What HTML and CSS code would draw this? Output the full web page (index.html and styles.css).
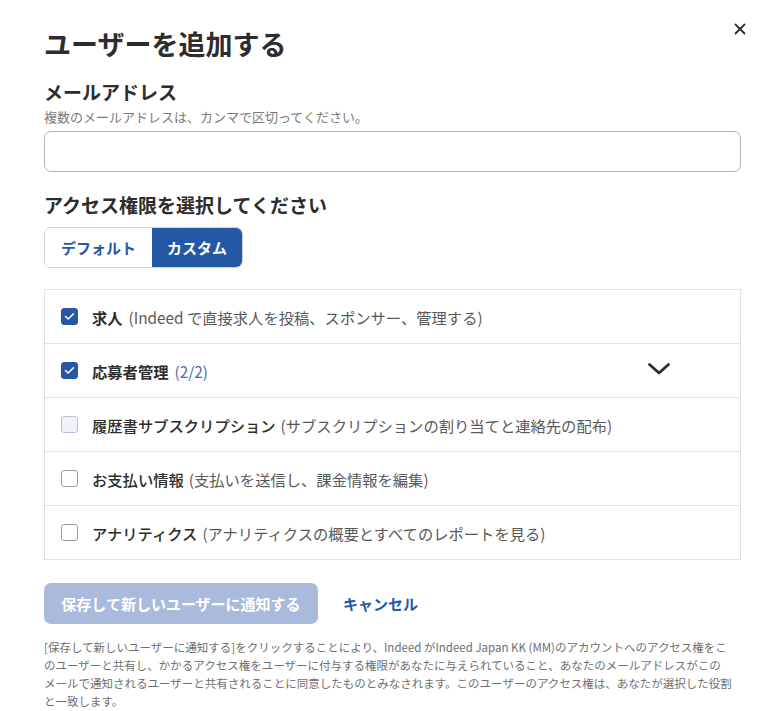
FILE: index.html
```html
<!DOCTYPE html>
<html lang="ja">
<head>
  <meta charset="UTF-8">
  <meta name="viewport" content="width=device-width, initial-scale=1.0">
  <title>ユーザーを追加する</title>
  <link rel="stylesheet" href="styles.css">
</head>
<body>
<div class="modal">
  <button class="close-btn" aria-label="閉じる">
    <svg width="12" height="12" viewBox="0 0 12 12"><path d="M1.5 1.5 L10.5 10.5 M10.5 1.5 L1.5 10.5" stroke="#2d2d2d" stroke-width="1.8" stroke-linecap="round"/></svg>
  </button>
  <h1>ユーザーを追加する</h1>

  <h2 class="section-title">メールアドレス</h2>
  <p class="hint">複数のメールアドレスは、カンマで区切ってください。</p>
  <input type="text" class="email-input">

  <h2 class="section-title access-title">アクセス権限を選択してください</h2>
  <div class="segmented">
    <button class="seg-item">デフォルト</button>
    <button class="seg-item active">カスタム</button>
  </div>

  <ul class="perm-list">
    <li class="perm-row">
      <span class="checkbox checked"><svg width="11" height="9" viewBox="0 0 11 9"><path d="M1.5 4.5 L4.2 7 L9.5 1.8" fill="none" stroke="#fff" stroke-width="1.6" stroke-linecap="round" stroke-linejoin="round"/></svg></span>
      <span class="perm-name">求人</span>
      <span class="perm-desc">(Indeed で直接求人を投稿、スポンサー、管理する)</span>
    </li>
    <li class="perm-row">
      <span class="checkbox checked"><svg width="11" height="9" viewBox="0 0 11 9"><path d="M1.5 4.5 L4.2 7 L9.5 1.8" fill="none" stroke="#fff" stroke-width="1.6" stroke-linecap="round" stroke-linejoin="round"/></svg></span>
      <span class="perm-name">応募者管理</span>
      <span class="perm-count">(2/2)</span>
      <span class="chevron"><svg width="24" height="14" viewBox="0 0 24 14"><path d="M2.5 2.5 L12 11 L21.5 2.5" fill="none" stroke="#2d2d2d" stroke-width="2.8" stroke-linecap="round" stroke-linejoin="round"/></svg></span>
    </li>
    <li class="perm-row">
      <span class="checkbox soft"></span>
      <span class="perm-name light">履歴書サブスクリプション</span>
      <span class="perm-desc">(サブスクリプションの割り当てと連絡先の配布)</span>
    </li>
    <li class="perm-row">
      <span class="checkbox"></span>
      <span class="perm-name light">お支払い情報</span>
      <span class="perm-desc">(支払いを送信し、課金情報を編集)</span>
    </li>
    <li class="perm-row">
      <span class="checkbox"></span>
      <span class="perm-name light">アナリティクス</span>
      <span class="perm-desc">(アナリティクスの概要とすべてのレポートを見る)</span>
    </li>
  </ul>

  <div class="actions">
    <button class="save-btn" disabled>保存して新しいユーザーに通知する</button>
    <button class="cancel-btn">キャンセル</button>
  </div>

  <p class="legal">[保存して新しいユーザーに通知する]をクリックすることにより、Indeed がIndeed Japan KK (MM)のアカウントへのアクセス権をこのユーザーと共有し、かかるアクセス権をユーザーに付与する権限があなたに与えられていること、あなたのメールアドレスがこのメールで通知されるユーザーと共有されることに同意したものとみなされます。このユーザーのアクセス権は、あなたが選択した役割と一致します。</p>
</div>
</body>
</html>
```

FILE: styles.css
```css
body {
  margin: 0;
  background-color: #fff;
  font-family: "Noto Sans CJK JP", "Noto Sans", sans-serif;
  color: #2d2d2d;
}
.modal {
  position: relative;
  padding: 26px 24px 0 44px;
}
.close-btn {
  position: absolute;
  top: 22px;
  right: 18px;
  border: none;
  background: none;
  padding: 0;
  width: 14px;
  height: 14px;
  display: flex;
  align-items: center;
  justify-content: center;
}
h1 {
  margin: 0;
  font-size: 27px;
  line-height: 36px;
  font-weight: 700;
  color: #2d2d2d;
}
.section-title {
  margin: 17px 0 0;
  font-size: 19px;
  line-height: 26px;
  font-weight: 700;
}
.access-title {
  margin-top: 20px;
}
.hint {
  margin: 3px 0 0;
  font-size: 13px;
  line-height: 18px;
  color: #7a7a7a;
}
.email-input {
  display: block;
  margin-top: 5px;
  width: 100%;
  height: 41px;
  box-sizing: border-box;
  border: 1px solid #b4b2b1;
  border-radius: 7px;
  padding: 0 12px;
  font-size: 14px;
}
.segmented {
  display: inline-flex;
  margin-top: 9px;
  height: 41px;
  border-radius: 7px;
  overflow: hidden;
  border: 1px solid #d4d2d0;
  box-sizing: border-box;
}
.seg-item {
  border: none;
  background: #fff;
  font-family: inherit;
  font-size: 15px;
  font-weight: 700;
  color: #2557a7;
  padding: 0;
  width: 107px;
}
.seg-item.active {
  background: #2557a7;
  color: #fff;
  width: 90px;
}
.perm-list {
  list-style: none;
  margin: 21px 0 0;
  padding: 0;
  border: 1px solid #e4e2e0;
}
.perm-row {
  display: flex;
  align-items: center;
  height: 54px;
  box-sizing: border-box;
  padding-left: 16px;
  font-size: 15.3px;
  border-top: 1px solid #e4e2e0;
}
.perm-row:first-child {
  border-top: none;
  height: 53px;
}
.checkbox {
  width: 17px;
  height: 17px;
  box-sizing: border-box;
  border: 1px solid #9d9d9d;
  border-radius: 3px;
  margin-right: 14px;
  display: flex;
  align-items: center;
  justify-content: center;
  flex-shrink: 0;
}
.checkbox.checked {
  background: #2557a7;
  border-color: #2557a7;
}
.checkbox.soft {
  background: #eef2fa;
  border-color: #b7c2da;
}
.perm-name {
  font-weight: 700;
  color: #2d2d2d;
  margin-right: 6px;
}
.perm-name.light {
  font-weight: 500;
  margin-right: 5px;
}
.perm-desc {
  color: #595959;
}
.perm-count {
  color: #4a6ea9;
}
.chevron {
  margin: -3px 69px 0 auto;
  display: flex;
}
.actions {
  display: flex;
  align-items: center;
  margin-top: 23px;
  gap: 25px;
}
.save-btn {
  height: 41px;
  width: 274px;
  border: none;
  border-radius: 7px;
  background: #a9badd;
  color: #fff;
  font-family: inherit;
  font-size: 15px;
  font-weight: 700;
}
.cancel-btn {
  border: none;
  background: none;
  padding: 0;
  font-family: inherit;
  font-size: 15px;
  font-weight: 700;
  color: #2557a7;
}
.legal {
  margin: 14px 0 0;
  max-width: 688px;
  font-size: 11.5px;
  line-height: 18px;
  color: #6f6f6f;
}
```
